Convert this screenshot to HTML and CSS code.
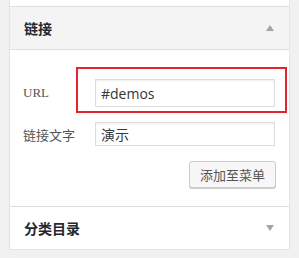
FILE: index.html
```html
<!DOCTYPE html>
<html>

<head>
    <title>菜单 - 链接</title>
    <link rel="stylesheet" href="styles.css">
</head>

<body>
    <div class="panel">
        <div class="panel-stub"></div>
        <div class="section-head open">
            <h3>链接</h3>
            <span class="arrow up"></span>
        </div>
        <div class="section-body">
            <div class="field url-field">
                <label>URL</label>
                <input class="text-input tall" type="text" value="#demos">
                <div class="highlight"></div>
            </div>
            <div class="field">
                <label>链接文字</label>
                <input class="text-input" type="text" value="演示">
            </div>
            <div class="actions">
                <button class="button">添加至菜单</button>
            </div>
        </div>
        <div class="section-head">
            <h3>分类目录</h3>
            <span class="arrow down"></span>
        </div>
    </div>
</body>

</html>
```

FILE: styles.css
```css
body {
    margin: 0;
    background-color: #f1f1f1;
    font-family: "Noto Sans CJK SC", "Liberation Sans", sans-serif;
    color: #444;
}

.panel {
    width: 279px;
    margin-left: 9px;
    background-color: #fff;
    border: 1px solid #e5e5e5;
    border-top: none;
    box-shadow: 0 1px 1px rgba(0, 0, 0, 0.06);
}

.panel-stub {
    height: 6px;
}

.section-head {
    display: flex;
    align-items: center;
    justify-content: space-between;
    height: 42px;
    padding: 0 15px 0 14px;
    border-top: 1px solid #dfdfdf;
}

.section-head.open {
    background-color: #f4f4f4;
    border-bottom: 1px solid #dfdfdf;
}

.section-head h3 {
    margin: 0;
    font-size: 14px;
    font-weight: bold;
    color: #23282d;
}

.arrow {
    width: 0;
    height: 0;
    border-left: 4px solid transparent;
    border-right: 4px solid transparent;
}

.arrow.up {
    border-bottom: 6px solid #a0a5aa;
}

.arrow.down {
    border-top: 6px solid #a0a5aa;
}

.section-body {
    padding: 29px 13px 18px 13px;
}

.field {
    display: flex;
    align-items: center;
    margin-bottom: 15px;
    position: relative;
}

.field label {
    width: 72px;
    font-size: 13px;
    color: #555;
}

.url-field label {
    font-family: "Liberation Serif", serif;
    font-size: 13px;
}

.text-input {
    box-sizing: border-box;
    width: 180px;
    height: 24px;
    margin: 0;
    padding: 0 5px;
    border: 1px solid #ddd;
    font-family: "Noto Sans CJK SC", sans-serif;
    font-size: 14px;
    color: #32373c;
    box-shadow: inset 0 1px 2px rgba(0, 0, 0, 0.07);
}

.text-input.tall {
    height: 28px;
    font-family: "Open Sans", sans-serif;
    font-size: 14px;
}

.highlight {
    position: absolute;
    left: 53px;
    top: -12px;
    width: 207px;
    height: 42px;
    border: 2px solid #e0262c;
}

.actions {
    display: flex;
    justify-content: flex-end;
    padding-right: 0;
}

.button {
    height: 27px;
    padding: 0 10px;
    background-color: #f7f7f7;
    border: 1px solid #ccc;
    border-radius: 3px;
    box-shadow: 0 1px 0 #ccc;
    font-family: "Noto Sans CJK SC", sans-serif;
    font-size: 13px;
    color: #555;
}
```
